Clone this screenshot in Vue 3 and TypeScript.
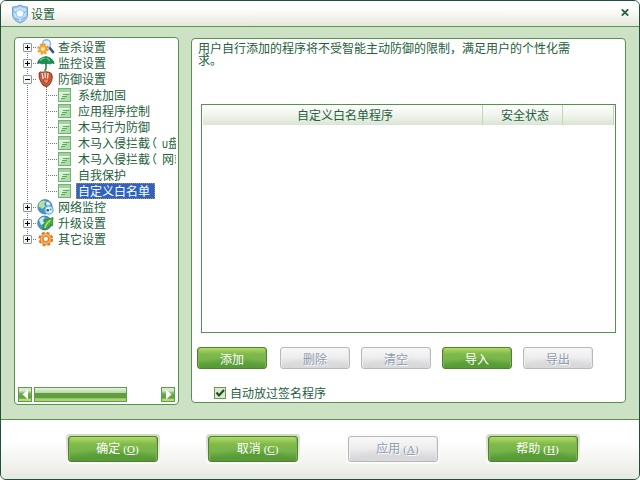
<script setup lang="ts">
import { ref } from 'vue'

type IconName = 'search' | 'umbrella' | 'glove' | 'globe' | 'update' | 'gear'

interface Child {
  text: string
  latin?: string
  tail?: string
}
interface Group {
  text: string
  icon: IconName
  open: boolean
  children: Child[]
}

const groups = ref<Group[]>([
  { text: '查杀设置', icon: 'search', open: false, children: [] },
  { text: '监控设置', icon: 'umbrella', open: false, children: [] },
  {
    text: '防御设置',
    icon: 'glove',
    open: true,
    children: [
      { text: '系统加固' },
      { text: '应用程序控制' },
      { text: '木马行为防御' },
      { text: '木马入侵拦截', latin: 'U', tail: '盘' },
      { text: '木马入侵拦截', tail: '网站' },
      { text: '自我保护' },
      { text: '自定义白名单' },
    ],
  },
  { text: '网络监控', icon: 'globe', open: false, children: [] },
  { text: '升级设置', icon: 'update', open: false, children: [] },
  { text: '其它设置', icon: 'gear', open: false, children: [] },
])
const selected = ref('自定义白名单')
const autoPass = ref(true)

const actions = [
  { text: '添加', off: false, wide: true },
  { text: '删除', off: true, wide: false },
  { text: '清空', off: true, wide: false },
  { text: '导入', off: false, wide: false },
  { text: '导出', off: true, wide: false },
]
const footer = [
  { text: '确定', key: 'O', off: false },
  { text: '取消', key: 'C', off: false },
  { text: '应用', key: 'A', off: true },
  { text: '帮助', key: 'H', off: false },
]
</script>

<template>
  <div class="window">
    <header class="title">
      <svg class="logo" width="18" height="20" viewBox="0 0 18 20">
        <path d="M1.5 3 Q5 3.4 9 1 Q13 3.4 16.5 3 V11 Q16 16.500 9 19 Q2 16.500 1.500 11Z" fill="#9cc8ec" stroke="#6ba5d6" />
        <path d="M3.500 5 Q6 5 9 3.300 Q12 5 14.500 5 V11 Q14 15 9 17 Q4 15 3.500 11Z" fill="#bfe0f6" stroke="#e2f3fc" stroke-dasharray="1.500 1" />
        <path d="M5 8 L7 6.500 L9 5.500 L11 6.500 L13 8 L12.500 11 L11 13 H7 L5.500 11Z" fill="#f4fbff" stroke="#7db2de" stroke-width=".7" />
        <path d="M4 14 L8 16 M10 16 L14 13 M3 7 L5 9 M15 7 L13 9" stroke="#5d9bd0" stroke-width=".8" />
      </svg>
      <span class="caption">设置</span>
      <svg class="close" width="8" height="7" viewBox="0 0 8 7">
        <path d="M.8 .3 L7.200 6.700 M7.200 .3 L.8 6.700" stroke="#23603c" stroke-width="1.700" />
      </svg>
    </header>

    <main class="body">
      <section class="panel side">
        <ul class="tree">
          <li v-for="(g, gi) in groups" :key="g.text" class="group" :class="{ first: gi === 0, last: gi === groups.length - 1 }">
            <div class="row">
              <span class="toggle" @click="g.open = !g.open">
                <svg width="9" height="9" viewBox="0 0 9 9">
                  <rect x=".5" y=".5" width="8" height="8" rx=".5" fill="#f6f6f2" stroke="#8d9aa5" />
                  <path d="M2 4.500 H7" stroke="#000" />
                  <path v-if="!g.open" d="M4.500 2 V7" stroke="#000" />
                </svg>
              </span>
              <span class="dots"></span>
              <svg class="icon" width="18" height="16" viewBox="0 0 18 16">
                <template v-if="g.icon === 'search'">
                  <path d="M12 8 L16 13" stroke="#2c5298" stroke-width="2.600" stroke-linecap="round" />
                  <circle cx="9.500" cy="4.800" r="4" fill="#e2f1fc" stroke="#8eb4e0" stroke-width="1.500" />
                  <circle cx="6" cy="10" r="4.900" fill="none" stroke="#e99425" stroke-width="1.700" stroke-dasharray="2.200 1.640" />
                  <circle cx="6" cy="10" r="3.300" fill="#fbd06c" stroke="#f0a02e" stroke-width="1.800" />
                  <circle cx="6" cy="10" r="1.300" fill="#fff4d2" />
                </template>
                <template v-else-if="g.icon === 'umbrella'">
                  <path d="M9 6 V13.500 Q9 15.300 7.200 15.200" fill="none" stroke="#17734a" stroke-width="1.400" />
                  <path d="M.5 8.500 Q1 3 9 1.500 Q16 3 17.200 8.500 Q15 7.500 13 9 Q11 7.700 9 9 Q7 7.500 5 9 Q3 7.500 .5 8.500Z" fill="#159253" stroke="#0b6d3d" stroke-width=".7" />
                  <path d="M3 5.500 Q5 3.300 8 3 M9.500 3 Q12 4 12.500 6" fill="none" stroke="#72d49b" stroke-width="1.200" />
                </template>
                <template v-else-if="g.icon === 'glove'">
                  <path d="M2 2 Q3 .3 5 1.200 L7 1 L9 .7 L12 1.200 Q15.500 2 15.300 6 Q15.200 10 13 13 Q11.500 15.700 9 15.500 Q5.500 15.300 4.300 11.500 Q1.500 8 2 2Z" fill="#c65a3a" stroke="#84321f" stroke-width=".9" />
                  <path d="M5 2 L6.200 8 M8 1.500 L8.300 7 M11 2 L10.500 7.500" stroke="#fae2cb" stroke-width="1.300" />
                  <path d="M6.500 9 Q7 13 9.500 12.500 Q12 11.500 11.800 8.500" fill="#e58b60" stroke="#913d25" stroke-width=".8" />
                </template>
                <template v-else-if="g.icon === 'globe'">
                  <circle cx="8" cy="7.800" r="7.200" fill="#4594ca" stroke="#2f79b2" stroke-width=".7" />
                  <path d="M3 3 Q6 .5 9 2 L7 5 L8.500 7.500 L5 10 L3 8 L1.500 8.500 Q1 5 3 3Z" fill="#b7e09c" />
                  <path d="M9 3 Q12 2 13.500 5 L11.500 8 L9.500 6Z" fill="#e1f5f3" />
                  <circle cx="12" cy="11" r="4.100" fill="#d7effb" stroke="#67a9d8" stroke-width="1.200" />
                  <circle cx="10.800" cy="11.300" r="1.300" fill="#1a5ba0" />
                  <circle cx="13.700" cy="10.300" r=".9" fill="#3d83c0" />
                </template>
                <template v-else-if="g.icon === 'update'">
                  <circle cx="7.700" cy="8" r="7" fill="#4698cf" stroke="#2877ab" stroke-width=".8" />
                  <path d="M2 5 Q4 1.500 8 2 L6 5 L8 8 L4 10Z" fill="#cbefdd" />
                  <path d="M6 14.500 Q5.500 10 8 7.500 L6.500 6 L16 2.500 L15.500 11 L13.500 9.500 Q11 14.500 6 14.500Z" fill="#51ae3b" stroke="#277c2c" stroke-width=".8" />
                  <path d="M8 13 Q8.500 9 13.500 5" fill="none" stroke="#a5e384" stroke-width="1.500" />
                </template>
                <template v-else>
                  <circle cx="8.800" cy="8" r="6.300" fill="none" stroke="#e07a20" stroke-width="2.100" stroke-dasharray="3 1.950" />
                  <circle cx="8.800" cy="8" r="4" fill="#fff" stroke="#e98025" stroke-width="3.700" />
                  <circle cx="8.800" cy="8" r="4.300" fill="none" stroke="#fab866" stroke-width="1.500" />
                </template>
              </svg>
              <span class="label">{{ g.text }}</span>
            </div>
            <ul v-if="g.open" class="children">
              <li v-for="(c, ci) in g.children" :key="ci" class="row child" @click="selected = c.text">
                <span class="elbow" :class="{ end: ci === g.children.length - 1 }"></span>
                <svg class="page" width="13" height="14" viewBox="0 0 13 14">
                  <rect x=".5" y=".5" width="12" height="13" fill="#d5f1cf" stroke="#72b375" />
                  <path d="M1 1 H12 V4 H1Z" fill="#9ed59b" />
                  <path d="M1 13 L12 4 V13Z" fill="#afdfa9" />
                  <path d="M5 6.500 H11 M4 8.500 H9 M3 10.500 H7" stroke="#60a767" />
                  <path d="M1.500 4.500 H11.500" stroke="#f4fff1" />
                </svg>
                <span class="label" :class="{ active: selected === c.text }">{{ c.text }}<template v-if="c.tail"><span class="paren">（</span><span v-if="c.latin" class="latin">{{ c.latin }}</span>{{ c.tail }}</template></span>
              </li>
            </ul>
          </li>
        </ul>
        <div class="scrollbar">
          <span class="arrow"><svg width="12" height="13" viewBox="0 0 12 13"><path d="M9 1.500 V11.500 L3.500 6.500Z" fill="#fff" /></svg></span>
          <span class="track"><span class="thumb"></span></span>
          <span class="arrow"><svg width="12" height="13" viewBox="0 0 12 13"><path d="M4 1.500 V11.500 L9.500 6.500Z" fill="#fff" /></svg></span>
        </div>
      </section>

      <section class="panel content">
        <p class="intro">用户自行添加的程序将不受智能主动防御的限制，满足用户的个性化需<br />求。</p>
        <div class="table">
          <div class="thead">
            <span>自定义白名单程序</span>
            <span>安全状态</span>
            <span></span>
          </div>
        </div>
        <div class="actions">
          <button v-for="a in actions" :key="a.text" class="btn" :class="{ off: a.off, wide: a.wide }" :disabled="a.off">{{ a.text }}</button>
        </div>
        <label class="check" @click="autoPass = !autoPass">
          <svg width="12" height="12" viewBox="0 0 12 12">
            <rect x=".5" y=".5" width="11" height="11" fill="#dce8cd" stroke="#71944e" />
            <path v-if="autoPass" d="M2.500 5.500 L5 8.500 L10 3" fill="none" stroke="#164e2c" stroke-width="2.100" />
          </svg>
          <span>自动放过签名程序</span>
        </label>
      </section>
    </main>

    <footer class="foot">
      <div v-for="f in footer" :key="f.key" class="frame" :class="{ muted: f.off }">
        <button class="btn big" :class="{ off: f.off }" :disabled="f.off">{{ f.text }}<span class="key">(<u>{{ f.key }}</u>)</span></button>
      </div>
    </footer>
  </div>
</template>

<style>
body {
  background: #fff;
  overflow: hidden;
}
</style>

<style scoped>
.window {
  box-sizing: border-box;
  width: 640px;
  height: 480px;
  display: flex;
  flex-direction: column;
  border: 1px solid #20503c;
  border-radius: 6px;
  overflow: hidden;
  background: #cde2c5;
  font: 12px/16px "Noto Sans CJK SC", sans-serif;
  color: #23603c;
}
.title {
  box-sizing: border-box;
  height: 26px;
  flex: none;
  display: flex;
  align-items: center;
  padding: 0 10px 0 10px;
  border-bottom: 1px solid #559a50;
  background: linear-gradient(#fff 0, #fdfdfb 35%, #e5e8dc 100%);
}
.caption {
  margin-left: 2px;
  flex: 1;
}
.close {
  margin-bottom: 3px;
}
.body {
  flex: 1;
  display: flex;
  align-items: flex-start;
  padding: 10px 13px 0;
  gap: 12px;
  min-height: 0;
}
.panel {
  box-sizing: border-box;
  background: #fff;
  border: 1px solid #559250;
  border-radius: 4px;
}
.side {
  width: 165px;
  height: 368px;
  display: flex;
  flex-direction: column;
  padding: 1px 3px 2px 8px;
}
.tree,
.children {
  list-style: none;
  margin: 0;
  padding: 0;
}
.tree {
  flex: 1;
  overflow: hidden;
  margin-right: -1px;
}
.group {
  background: repeating-linear-gradient(#777 0 1px, transparent 1px 2px) 4px 0 / 1px 100% no-repeat;
}
.group.first {
  background-position: 4px 8px;
}
.group.last {
  background-size: 1px 8px;
}
.row {
  display: flex;
  align-items: center;
  height: 16px;
  white-space: nowrap;
}
.toggle {
  width: 9px;
  height: 9px;
  display: flex;
  background: #fff;
}
.dots {
  width: 5px;
  height: 1px;
  background: repeating-linear-gradient(90deg, transparent 0 1px, #777 1px 2px);
}
.icon {
  margin-right: 2px;
  flex: none;
}
.label {
  height: 16px;
  padding: 0 1px;
}
.elbow {
  width: 12px;
  height: 16px;
  margin-left: 23px;
  flex: none;
  background:
    repeating-linear-gradient(#777 0 1px, transparent 1px 2px) 0 0 / 1px 16px no-repeat,
    repeating-linear-gradient(90deg, #777 0 1px, transparent 1px 2px) 0 8px / 12px 1px no-repeat;
}
.elbow.end {
  background-size: 1px 8px, 12px 1px;
}
.page {
  flex: none;
  margin-right: 5px;
}
.child .label {
  padding: 0 2px;
}
.child .label.active {
  background: #2f63c0;
  color: #fff;
  outline: 1px dotted #b99540;
  outline-offset: -1px;
  padding-right: 5px;
}
.paren {
  font-feature-settings: "halt";
  padding: 0 5px 0 1px;
}
.latin {
  font: 10px/12px "Liberation Mono", monospace;
}
.scrollbar {
  display: flex;
  height: 15px;
  margin-left: -5px;
  gap: 2px;
}
.arrow {
  box-sizing: border-box;
  display: flex;
  width: 14px;
  height: 15px;
  flex: none;
  border: 1px solid #5d9d4b;
  background: linear-gradient(#d7e9cd 0 20%, #6fab4e 45%, #5b9f3c 80%, #b5de77 82%);
}
.track {
  flex: 1;
}
.thumb {
  box-sizing: border-box;
  display: block;
  width: 93px;
  height: 15px;
  border: 1px solid #5d9d4b;
  background: linear-gradient(#e7f2e0 0, #b8d7a5 38%, #5e9e3b 42%, #609f3d 78%, #a8d574 82%);
}
.content {
  width: 436px;
  height: 365px;
  margin-top: 1px;
  padding: 3px 9px 0;
}
.intro {
  margin: 0 0 0 -3px;
  height: 62px;
  line-height: 12px;
  white-space: nowrap;
}
.table {
  box-sizing: border-box;
  width: 415px;
  height: 229px;
  border: 1px solid #559250;
}
.thead {
  display: grid;
  grid-template-columns: 280px 80px 51px;
  height: 20px;
  line-height: 19px;
  padding-left: 1px;
  text-align: center;
}
.thead span {
  border-right: 1px solid #bcdcae;
  padding-left: 5px;
  background: linear-gradient(#fefefd, #f1f4ed 50%, #dae4d4);
}
.actions {
  display: flex;
  gap: 11px;
  margin: 14px 0 0 -4px;
}
.btn {
  box-sizing: border-box;
  width: 70px;
  height: 22px;
  padding: 2px 0 0;
  border: 1px solid #4f822c;
  border-radius: 3px;
  font: inherit;
  line-height: 18px;
  color: #fff;
  background:
    radial-gradient(ellipse 56% 60% at 50% 105%, #589c37 45%, transparent 100%),
    linear-gradient(#b1dc68 0, #80b94a 30%, #76b54b 60%, #519331 100%);
  box-shadow: inset 1px 0 #83b354, inset -1px 0 #83b354;
}
.btn.wide {
  margin-right: 2px;
}
.btn.off {
  color: #8d9cb0;
  border-color: #b8b8bc;
  text-shadow: 1px 1px #fff;
  background:
    radial-gradient(ellipse 56% 60% at 50% 105%, #d9d9dc 45%, transparent 100%),
    linear-gradient(#f8f8f9, #eeeeef 45%, #d3d3d7);
  box-shadow: inset 1px 0 #f0f0f2, inset -1px 0 #e7e7e9;
}
.check {
  display: flex;
  align-items: center;
  gap: 4px;
  margin: 16px 0 0 13px;
}
.foot {
  flex: none;
  box-sizing: border-box;
  height: 60px;
  border-top: 1px solid #559250;
  background: linear-gradient(#fff 0 35%, #eceee7 88%, #e4e9df 100%);
  display: flex;
  align-items: flex-start;
  gap: 46px;
  padding: 14px 0 0 65px;
}
.frame {
  box-sizing: border-box;
  width: 94px;
  height: 30px;
  padding: 2px;
  border-radius: 4px;
  background: linear-gradient(#cedac4, #e7eae2 60%, #fff);
}
.frame.muted {
  background: #fafafa;
}
.btn.big {
  display: block;
  width: 90px;
  height: 26px;
  padding: 0 0 2px;
  line-height: 20px;
  text-indent: 9px;
}
.key {
  margin-left: 3px;
  font: 11px "Liberation Serif", serif;
}
</style>
